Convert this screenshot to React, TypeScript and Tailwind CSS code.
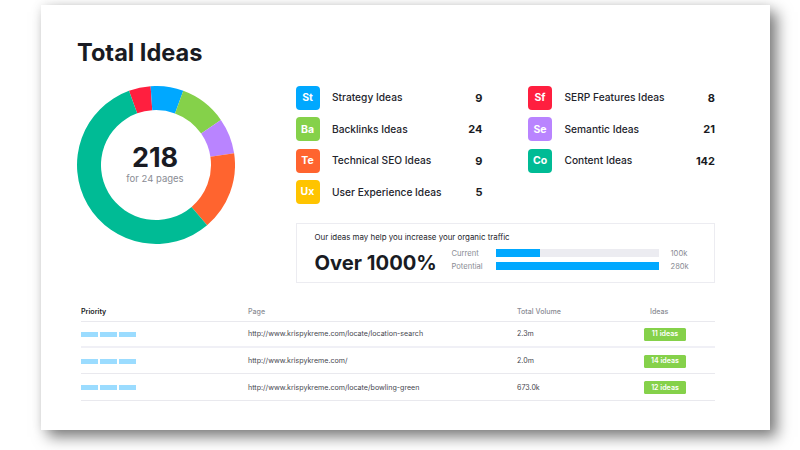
import React from "react";

const segs: [number, number, string][] = [
  [-20, -3.9, "#ff1f3f"],
  [-3.9, 20.2, "#00a8ff"],
  [20.2, 55.2, "#85d14a"],
  [55.2, 81.5, "#b984ff"],
  [81.5, 139.7, "#ff642f"],
  [139.7, 340, "#00bb95"],
];

function pt(r: number, a: number): string {
  const t = (a * Math.PI) / 180;
  return `${(79 + r * Math.sin(t)).toFixed(2)} ${(79 - r * Math.cos(t)).toFixed(2)}`;
}

function arc(a0: number, a1: number): string {
  const large = a1 - a0 > 180 ? 1 : 0;
  return `M${pt(79, a0)} A79 79 0 ${large} 1 ${pt(79, a1)} L${pt(55, a1)} A55 55 0 ${large} 0 ${pt(55, a0)} Z`;
}

const Item = ({ code, color, label, n, w }: { code: string; color: string; label: string; n: string; w: string }) => (
  <div className={`flex items-center h-[24px] ${w}`}>
    <div
      className="w-[24px] h-[24px] rounded-[4px] flex items-center justify-center text-white text-[10.5px] font-bold shrink-0"
      style={{ backgroundColor: color }}
    >
      {code}
    </div>
    <div className="ml-[12.5px] text-[10.2px] font-medium text-[#23242c] flex-1 whitespace-nowrap">{label}</div>
    <div className="text-[11px] font-bold text-[#191b23]">{n}</div>
  </div>
);

const rows = [
  ["http://www.krispykreme.com/locate/location-search", "2.3m", "11 ideas", "border-b-2 border-[#f0f0f6]", "h-[26.5px]"],
  ["http://www.krispykreme.com/", "2.0m", "14 ideas", "border-b border-[#e9e9ee]", "h-[26px]"],
  ["http://www.krispykreme.com/locate/bowling-green", "673.0k", "12 ideas", "border-b border-[#e9e9ee]", "h-[27px]"],
];

export default function App() {
  return (
    <div
      className="w-[800px] h-[450px] bg-white overflow-hidden pt-[5px] pl-[41px]"
      style={{ fontFamily: "Inter, 'Liberation Sans', sans-serif" }}
    >
      <div className="w-[729px] h-[425px] bg-white pl-[36px] pt-[34px] shadow-[0_0_10px_rgba(0,0,0,0.08),7px_7px_14px_rgba(0,0,0,0.5)]">
        <h1 className="text-[23.6px] leading-[28px] font-bold text-[#191b23]">Total Ideas</h1>
        <div className="flex mt-[19px]">
          <div className="relative w-[158px] h-[158px] shrink-0">
            <svg width="158" height="158" viewBox="0 0 158 158">
              {segs.map(([a, b, c]) => (
                <path key={c} d={arc(a, b)} fill={c} />
              ))}
            </svg>
            <div className="absolute inset-0 flex flex-col items-center justify-center pb-[2px] pr-[2px]">
              <div className="text-[27px] leading-[28px] font-bold text-[#191b23]">218</div>
              <div className="text-[9.5px] leading-[12px] text-[#8a8c94] mt-[1px]">for 24 pages</div>
            </div>
          </div>
          <div className="ml-[60.5px] w-[419.5px]">
            <div className="flex">
              <div className="flex flex-col gap-[7.4px] w-[232.5px]">
                <Item code="St" color="#00a8ff" label="Strategy Ideas" n="9" w="w-[187px]" />
                <Item code="Ba" color="#85d14a" label="Backlinks Ideas" n="24" w="w-[187px]" />
                <Item code="Te" color="#ff642f" label="Technical SEO Ideas" n="9" w="w-[187px]" />
                <Item code="Ux" color="#ffc400" label="User Experience Ideas" n="5" w="w-[187px]" />
              </div>
              <div className="flex flex-col gap-[7.4px]">
                <Item code="Sf" color="#ff1f3f" label="SERP Features Ideas" n="8" w="w-[187px]" />
                <Item code="Se" color="#b984ff" label="Semantic Ideas" n="21" w="w-[187px]" />
                <Item code="Co" color="#00bb95" label="Content Ideas" n="142" w="w-[187px]" />
              </div>
            </div>
            <div className="mt-[18.8px] h-[60px] border border-[#ececf1] pl-[18px] pt-[8px]">
              <div className="text-[7.9px] leading-[11px] text-[#23242c] whitespace-nowrap">Our ideas may help you increase your organic traffic</div>
              <div className="flex items-start mt-[3px]">
                <div className="text-[20.2px] leading-[28px] mt-[3px] font-bold text-[#191b23] w-[137px] whitespace-nowrap">Over 1000%</div>
                <div className="flex flex-col gap-[5px] mt-[3.5px] text-[7.6px] text-[#8a8c94]">
                  {[
                    ["Current", "w-[44px]", "100k"],
                    ["Potential", "w-[163px]", "280k"],
                  ].map(([l, wd, v]) => (
                    <div key={l} className="flex items-center h-[8px]">
                      <div className="w-[44px]">{l}</div>
                      <div className="w-[163px] h-[8px] bg-[#ececf1]">
                        <div className={`h-[8px] bg-[#00a8ff] ${wd}`} />
                      </div>
                      <div className="ml-[12px]">{v}</div>
                    </div>
                  ))}
                </div>
              </div>
            </div>
          </div>
        </div>
        <div className="ml-[4px] w-[634px] mt-[21px] text-[7.1px]">
          <div className="grid grid-cols-[167px_269px_133px_1fr] items-center h-[18px] border-b border-[#e9e9ee] text-[#8a8c94] font-medium">
            <div className="text-[#191b23] font-semibold">Priority</div>
            <div>Page</div>
            <div>Total Volume</div>
            <div>Ideas</div>
          </div>
          {rows.map(([url, vol, ideas, border, h]) => (
            <div key={url} className={`grid grid-cols-[167px_269px_127px_1fr] items-center pt-[1px] text-[#45464e] ${border} ${h}`}>
              <div className="flex gap-[2px]">
                <div className="w-[17px] h-[5px] bg-[#9bdcff]" />
                <div className="w-[17px] h-[5px] bg-[#9bdcff]" />
                <div className="w-[17px] h-[5px] bg-[#9bdcff]" />
              </div>
              <div className="whitespace-nowrap">{url}</div>
              <div>{vol}</div>
              <div className="w-[42px] h-[13px] rounded-[1.5px] bg-[#85d14a] text-white font-semibold flex items-center justify-center">{ideas}</div>
            </div>
          ))}
        </div>
      </div>
    </div>
  );
}
